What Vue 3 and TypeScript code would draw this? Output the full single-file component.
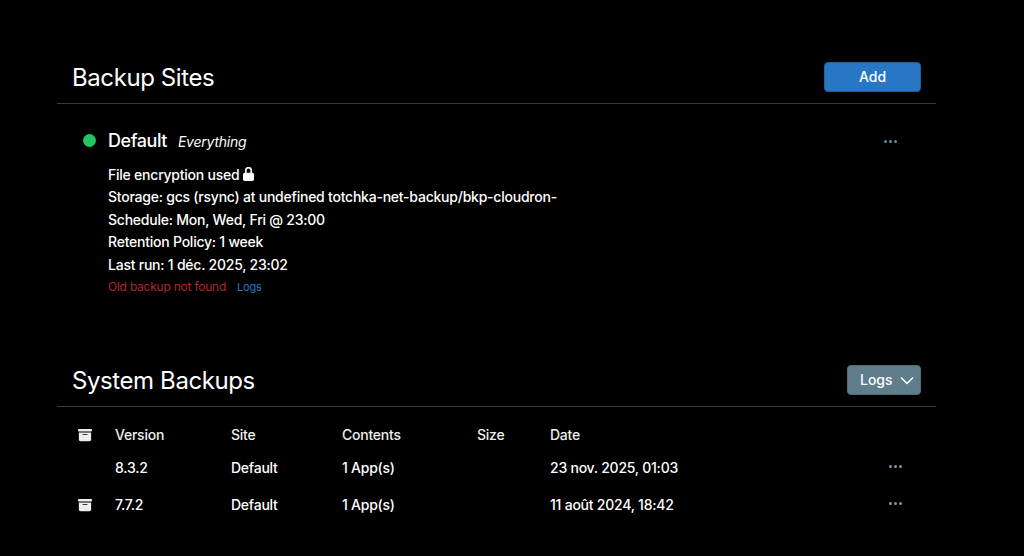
<script setup lang="ts">
interface Backup {
  archived: boolean
  version: string
  site: string
  contents: string
  size: string
  date: string
}

const details: string[] = [
  'Storage: gcs (rsync) at undefined totchka-net-backup/bkp-cloudron-',
  'Schedule: Mon, Wed, Fri @ 23:00',
  'Retention Policy: 1 week',
  'Last run: 1 déc. 2025, 23:02',
]

const backups: Backup[] = [
  { archived: false, version: '8.3.2', site: 'Default', contents: '1 App(s)', size: '', date: '23 nov. 2025, 01:03' },
  { archived: true, version: '7.7.2', site: 'Default', contents: '1 App(s)', size: '', date: '11 août 2024, 18:42' },
]
</script>

<template>
  <main class="page">
    <section class="sites">
      <header class="section-head">
        <h1>Backup Sites</h1>
        <button class="btn btn-primary" type="button">Add</button>
      </header>

      <article class="site">
        <span class="dot"></span>
        <div class="site-body">
          <div class="site-title">
            <span class="site-name">Default</span>
            <em class="site-scope">Everything</em>
          </div>
          <div class="line">
            File encryption used
            <svg class="lock" viewBox="0 0 448 560" aria-hidden="true">
              <path d="M114 250V130a110 110 0 0 1 220 0v120" fill="none" stroke="currentColor" stroke-width="68" />
              <rect x="0" y="225" width="448" height="335" rx="70" fill="currentColor" />
            </svg>
          </div>
          <div v-for="d in details" :key="d" class="line">{{ d }}</div>
          <div class="status">
            <span class="error">Old backup not found</span>
            <a class="link">Logs</a>
          </div>
        </div>
        <button class="more more-site" type="button" aria-label="More"><i></i><i></i><i></i></button>
      </article>
    </section>

    <section class="system">
      <header class="section-head">
        <h1>System Backups</h1>
        <button class="btn btn-secondary" type="button">
          Logs
          <svg class="chev" viewBox="0 0 14 9" aria-hidden="true">
            <path d="M1 1.500 7 7.500l6-6" fill="none" stroke="currentColor" stroke-width="1.500" />
          </svg>
        </button>
      </header>

      <div class="table">
        <div class="row row-head">
          <span class="icon-cell">
            <svg class="box" viewBox="0 0 512 512" aria-hidden="true">
              <path fill="currentColor" d="M32 32h448c17.700 0 32 14.300 32 32v32c0 17.700-14.300 32-32 32H32c-17.700 0-32-14.300-32-32V64c0-17.700 14.300-32 32-32zm0 128h448v256c0 35.300-28.700 64-64 64H96c-35.300 0-64-28.700-64-64V160zm128 80c0 8.800 7.200 16 16 16h160c8.800 0 16-7.200 16-16s-7.200-16-16-16H176c-8.800 0-16 7.200-16 16z" />
            </svg>
          </span>
          <span>Version</span>
          <span>Site</span>
          <span>Contents</span>
          <span>Size</span>
          <span>Date</span>
          <span></span>
        </div>
        <div v-for="b in backups" :key="b.version" class="row">
          <span class="icon-cell">
            <svg v-if="b.archived" class="box" viewBox="0 0 512 512" aria-hidden="true">
              <path fill="currentColor" d="M32 32h448c17.700 0 32 14.300 32 32v32c0 17.700-14.300 32-32 32H32c-17.700 0-32-14.300-32-32V64c0-17.700 14.300-32 32-32zm0 128h448v256c0 35.300-28.700 64-64 64H96c-35.300 0-64-28.700-64-64V160zm128 80c0 8.800 7.200 16 16 16h160c8.800 0 16-7.200 16-16s-7.200-16-16-16H176c-8.800 0-16 7.200-16 16z" />
            </svg>
          </span>
          <span>{{ b.version }}</span>
          <span>{{ b.site }}</span>
          <span>{{ b.contents }}</span>
          <span>{{ b.size }}</span>
          <span>{{ b.date }}</span>
          <button class="more" type="button" aria-label="More"><i></i><i></i><i></i></button>
        </div>
      </div>
    </section>
  </main>
</template>

<style>
html, body { background: #000; }
</style>

<style scoped>
.page {
  box-sizing: border-box;
  width: 879px;
  height: 556px;
  margin-left: 57px;
  padding-top: 60px;
  color: #fff;
  font-family: Inter, "Liberation Sans", sans-serif;
  font-size: 14px;
  font-weight: 450;
  letter-spacing: -0.0165em;
  line-height: 22.500px;
  overflow: hidden;
}
.section-head {
  display: flex;
  align-items: center;
  justify-content: space-between;
  height: 43px;
  padding: 0 15px;
  border-bottom: 1px solid #3a3a3a;
}
.section-head h1 {
  margin: 0 0 8px;
  font-size: 24px;
  font-weight: 400;
  letter-spacing: -0.017em;
  line-height: 36px;
}
.btn {
  display: inline-flex;
  align-items: center;
  justify-content: center;
  gap: 7px;
  height: 30px;
  margin-bottom: 9px;
  border-radius: 4px;
  color: #fff;
  font: inherit;
  font-weight: 500;
}
.btn-primary {
  width: 97px;
  background: #2777c4;
  border: 1px solid #1f5f9e;
}
.btn-secondary {
  width: 74px;
  padding: 0 0 0 12px;
  background: #607d8b;
  border: 1px solid #536b77;
  justify-content: flex-start;
}
.chev { width: 14px; height: 9px; }

.site {
  display: flex;
  padding: 25px 15px 0 26px;
  height: 259px;
  box-sizing: border-box;
  position: relative;
}
.dot {
  flex: none;
  width: 13px;
  height: 13px;
  margin-top: 5px;
  border-radius: 50%;
  background: #22c55e;
}
.site-body { flex: 1; margin-left: 12px; }
.site-title {
  display: flex;
  align-items: baseline;
  gap: 11px;
  margin-bottom: 10px;
}
.site-name { font-size: 18px; font-weight: 500; letter-spacing: -0.025em; line-height: 24px; }
.site-scope { font-size: 14px; }
.line { white-space: nowrap; }
.lock { width: 11px; height: 14px; vertical-align: -1px; }
.status { font-size: 12px; font-weight: 400; line-height: 22px; display: flex; gap: 10px; }
.error { color: #b3262b; }
.link { color: #2777c4; font-size: 11px; margin-left: 1px; }

.more {
  display: inline-flex;
  align-items: center;
  justify-content: center;
  gap: 2px;
  padding: 0;
  background: none;
  border: 0;
  height: 22px;
}
.more i {
  width: 3px;
  height: 3px;
  border-radius: 50%;
  background: #7c97a4;
}
.more-site { position: absolute; right: 39px; top: 26px; width: 14px; }
.more-site i { background: #5f8aa0; }

.table { padding-top: 17px; }
.row {
  display: grid;
  grid-template-columns: 58px 116px 111px 135px 73px 1fr 60px;
  align-items: center;
  height: 37px;
}
.row-head { height: 23px; margin-bottom: 3px; font-weight: 500; color: #eee; }
.icon-cell { display: flex; padding-left: 21px; margin-top: -2px; }
.box { width: 14px; height: 14px; color: #eee; }
.row .more { justify-self: start; margin: -4px 0 0 13px; }
</style>
